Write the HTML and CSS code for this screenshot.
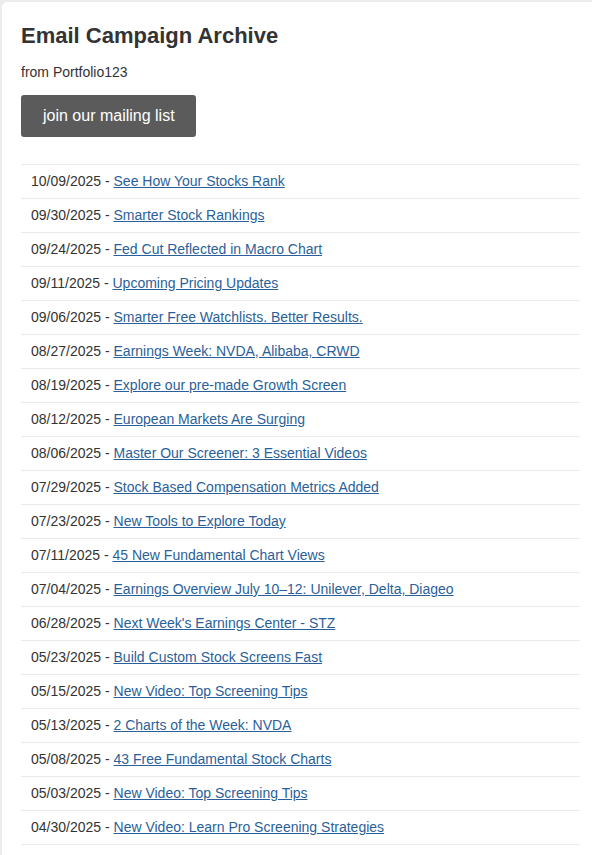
FILE: index.html
```html
<!DOCTYPE html>
<html>
<head>
<meta charset="utf-8">
<link rel="stylesheet" href="styles.css">
</head>
<body>
<div class="card">
  <h1 class="title">Email Campaign Archive</h1>
  <p class="from">from Portfolio123</p>
  <a class="join" href="#">join our mailing list</a>
  <ul class="list">
    <li>10/09/2025 - <a href="#">See How Your Stocks Rank</a></li>
    <li>09/30/2025 - <a href="#">Smarter Stock Rankings</a></li>
    <li>09/24/2025 - <a href="#">Fed Cut Reflected in Macro Chart</a></li>
    <li>09/11/2025 - <a href="#">Upcoming Pricing Updates</a></li>
    <li>09/06/2025 - <a href="#">Smarter Free Watchlists. Better Results.</a></li>
    <li>08/27/2025 - <a href="#">Earnings Week: NVDA, Alibaba, CRWD</a></li>
    <li>08/19/2025 - <a href="#">Explore our pre-made Growth Screen</a></li>
    <li>08/12/2025 - <a href="#">European Markets Are Surging</a></li>
    <li>08/06/2025 - <a href="#">Master Our Screener: 3 Essential Videos</a></li>
    <li>07/29/2025 - <a href="#">Stock Based Compensation Metrics Added</a></li>
    <li>07/23/2025 - <a href="#">New Tools to Explore Today</a></li>
    <li>07/11/2025 - <a href="#">45 New Fundamental Chart Views</a></li>
    <li>07/04/2025 - <a href="#">Earnings Overview July 10–12: Unilever, Delta, Diageo</a></li>
    <li>06/28/2025 - <a href="#">Next Week's Earnings Center - STZ</a></li>
    <li>05/23/2025 - <a href="#">Build Custom Stock Screens Fast</a></li>
    <li>05/15/2025 - <a href="#">New Video: Top Screening Tips</a></li>
    <li>05/13/2025 - <a href="#">2 Charts of the Week: NVDA</a></li>
    <li>05/08/2025 - <a href="#">43 Free Fundamental Stock Charts</a></li>
    <li>05/03/2025 - <a href="#">New Video: Top Screening Tips</a></li>
    <li>04/30/2025 - <a href="#">New Video: Learn Pro Screening Strategies</a></li>
  </ul>
</div>
</body>
</html>
```
FILE: styles.css
```css
html, body {
  margin: 0;
  padding: 0;
  overflow: hidden;
}
body {
  background: #ececec;
  font-family: "Liberation Sans", Arial, sans-serif;
  color: #333;
  font-size: 14px;
  line-height: 20px;
  padding: 2px 0 0 2px;
  height: 100vh;
  box-sizing: border-box;
}
.card {
  background: #fff;
  border-radius: 5px 0 0 0;
  margin-right: -20px;
  padding: 21px 32px 0 19px;
  height: 100%;
  box-sizing: border-box;
}
.title {
  margin: 0 0 14px;
  font-size: 22px;
  line-height: 25px;
  font-weight: bold;
  color: #333;
}
.from {
  margin: 0 0 13px;
}
.join {
  display: inline-block;
  background: #5b5b5b;
  color: #fff;
  text-decoration: none;
  font-size: 16px;
  line-height: 18px;
  padding: 12px 21px 12px 22px;
  border-radius: 3px;
}
.list {
  list-style: none;
  margin: 27px 0 0;
  padding: 0;
  border-bottom: 1px solid #eaeaea;
}
.list li {
  border-top: 1px solid #eaeaea;
  padding: 7px 10px;
  line-height: 19px;
}
.list a {
  color: #2b5f99;
  text-decoration: underline;
}
```
